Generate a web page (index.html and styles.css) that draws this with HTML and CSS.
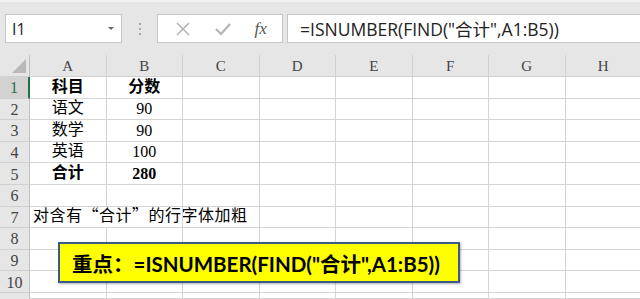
FILE: index.html
```html
<!DOCTYPE html>
<html lang="zh-CN">

<head>
  <meta charset="UTF-8">
  <meta name="viewport" content="width=device-width, initial-scale=1.0">
  <title>ISNUMBER FIND</title>
  <link rel="stylesheet" href="styles.css">
</head>

<body>
  <div class="toolbar">
    <div class="namebox">
      <span>I1</span>
      <span class="caret"></span>
    </div>
    <div class="dots"><i></i><i></i><i></i></div>
    <div class="buttons">
      <svg width="16" height="16" viewBox="0 0 16 16"><path d="M2 2 L14 14 M14 2 L2 14" stroke="#b4b4b4" stroke-width="1.6" fill="none"/></svg>
      <svg width="18" height="16" viewBox="0 0 18 16"><path d="M2 8 L7 13 L16 3" stroke="#b4b4b4" stroke-width="2.2" fill="none"/></svg>
      <span class="fx">fx</span>
    </div>
    <div class="formula">=ISNUMBER(FIND("合计",A1:B5))</div>
  </div>

  <div class="sheet">
    <div class="grid">
      <div class="corner"><span class="tri"></span></div>
      <div class="colhead">A</div>
      <div class="colhead">B</div>
      <div class="colhead">C</div>
      <div class="colhead">D</div>
      <div class="colhead">E</div>
      <div class="colhead">F</div>
      <div class="colhead">G</div>
      <div class="colhead">H</div>

      <div class="rowhead active">1</div>
      <div class="cell center bold">科目</div>
      <div class="cell center bold">分数</div>
      <div class="cell"></div><div class="cell"></div><div class="cell"></div><div class="cell"></div><div class="cell"></div><div class="cell"></div>

      <div class="rowhead">2</div>
      <div class="cell center">语文</div>
      <div class="cell center">90</div>
      <div class="cell"></div><div class="cell"></div><div class="cell"></div><div class="cell"></div><div class="cell"></div><div class="cell"></div>

      <div class="rowhead">3</div>
      <div class="cell center">数学</div>
      <div class="cell center">90</div>
      <div class="cell"></div><div class="cell"></div><div class="cell"></div><div class="cell"></div><div class="cell"></div><div class="cell"></div>

      <div class="rowhead">4</div>
      <div class="cell center">英语</div>
      <div class="cell center">100</div>
      <div class="cell"></div><div class="cell"></div><div class="cell"></div><div class="cell"></div><div class="cell"></div><div class="cell"></div>

      <div class="rowhead">5</div>
      <div class="cell center bold">合计</div>
      <div class="cell center bold">280</div>
      <div class="cell"></div><div class="cell"></div><div class="cell"></div><div class="cell"></div><div class="cell"></div><div class="cell"></div>

      <div class="rowhead">6</div>
      <div class="cell"></div><div class="cell"></div><div class="cell"></div><div class="cell"></div><div class="cell"></div><div class="cell"></div><div class="cell"></div><div class="cell"></div>

      <div class="rowhead">7</div>
      <div class="cell overflow cjk">对含有“合计”的行字体加粗</div>
      <div class="cell"></div><div class="cell"></div><div class="cell"></div><div class="cell"></div><div class="cell"></div><div class="cell"></div><div class="cell"></div>

      <div class="rowhead">8</div>
      <div class="cell"></div><div class="cell"></div><div class="cell"></div><div class="cell"></div><div class="cell"></div><div class="cell"></div><div class="cell"></div><div class="cell"></div>

      <div class="rowhead">9</div>
      <div class="cell"></div><div class="cell"></div><div class="cell"></div><div class="cell"></div><div class="cell"></div><div class="cell"></div><div class="cell"></div><div class="cell"></div>

      <div class="rowhead">10</div>
      <div class="cell"></div><div class="cell"></div><div class="cell"></div><div class="cell"></div><div class="cell"></div><div class="cell"></div><div class="cell"></div><div class="cell"></div>

      <div class="rowhead last"></div>
      <div class="cell"></div><div class="cell"></div><div class="cell"></div><div class="cell"></div><div class="cell"></div><div class="cell"></div><div class="cell"></div><div class="cell"></div>
    </div>

    <div class="note"><span class="key">重点：</span>=ISNUMBER(FIND("合计",A1:B5))</div>
  </div>
</body>

</html>
```

FILE: styles.css
```css
body {
  margin: 0;
  width: 640px;
  height: 299px;
  overflow: hidden;
  background-color: #ffffff;
  font-family: "Liberation Serif", "Noto Sans CJK SC", serif;
}

.toolbar {
  height: 55px;
  box-sizing: border-box;
  border-top: 2px solid #f2f2f2;
  background-color: #e6e6e6;
  display: flex;
  align-items: flex-start;
  padding-top: 12px;
}

.namebox {
  margin-left: 5px;
  width: 117px;
  height: 29px;
  box-sizing: border-box;
  background-color: #ffffff;
  border: 1px solid #c6c6c6;
  display: flex;
  align-items: center;
  justify-content: space-between;
  padding: 0 7px 0 6px;
  font-family: "Open Sans", "Liberation Sans", sans-serif;
  font-size: 16px;
  color: #222222;
}

.caret {
  width: 0;
  height: 0;
  border-left: 3px solid transparent;
  border-right: 3px solid transparent;
  border-top: 3px solid #666666;
}

.dots {
  width: 35px;
  height: 29px;
  display: flex;
  flex-direction: column;
  align-items: center;
  justify-content: center;
  gap: 3px;
}

.dots i {
  width: 2px;
  height: 2px;
  background-color: #a8a8a8;
}

.buttons {
  width: 126px;
  height: 29px;
  box-sizing: border-box;
  background-color: #ffffff;
  border: 1px solid #c6c6c6;
  display: flex;
  align-items: center;
  justify-content: space-around;
  padding: 0 4px 0 6px;
}

.fx {
  font-family: "Liberation Serif", serif;
  font-style: italic;
  font-size: 17px;
  color: #555555;
}

.formula {
  margin-left: 4px;
  flex: 1;
  height: 29px;
  box-sizing: border-box;
  background-color: #ffffff;
  border: 1px solid #c6c6c6;
  border-right: none;
  padding-left: 12px;
  display: flex;
  align-items: center;
  font-family: "Open Sans", "Noto Sans CJK SC", sans-serif;
  font-size: 17.5px;
  color: #222222;
}

.sheet {
  position: relative;
}

.grid {
  display: grid;
  grid-template-columns: 30px repeat(8, 76.5px);
  grid-template-rows: 22px repeat(10, 21.6px) 6px;
  overflow: hidden;
}

.corner,
.colhead,
.rowhead {
  background-color: #e6e6e6;
  color: #444444;
  box-sizing: border-box;
  border-right: 1px solid #d0d0d0;
  border-bottom: 1px solid #d0d0d0;
  display: flex;
  align-items: center;
  justify-content: center;
  font-family: "Liberation Serif", serif;
  font-size: 15px;
}

.corner {
  position: relative;
  border-right-color: #c0c0c0;
}

.tri {
  position: absolute;
  right: 3px;
  bottom: 3px;
  width: 0;
  height: 0;
  border-left: 14px solid transparent;
  border-bottom: 14px solid #b9b9b9;
}

.colhead {
  padding-top: 1px;
}

.rowhead {
  padding-top: 2px;
  font-size: 16px;
  border-right-color: #c0c0c0;
}

.rowhead.last {
  border-bottom: none;
}

.rowhead.active {
  background-color: #d2d2d2;
  border-right: 2px solid #217346;
  color: #217346;
}

.cell {
  box-sizing: border-box;
  border-right: 1px solid #d4d4d4;
  border-bottom: 1px solid #d4d4d4;
  display: flex;
  align-items: flex-end;
  padding: 0 3px 1px;
  font-size: 16px;
  color: #000000;
  white-space: nowrap;
}

.center {
  justify-content: center;
}

.bold {
  font-weight: bold;
}

.cjk {
  font-family: "Noto Sans CJK SC", sans-serif;
  letter-spacing: 0.5px;
}

.overflow {
  overflow: visible;
  border-right-color: transparent;
}

.note {
  position: absolute;
  left: 58px;
  top: 187px;
  width: 402px;
  height: 41px;
  box-sizing: border-box;
  background-color: #ffff00;
  border: 2px solid #3c5a86;
  box-shadow: 1px 1px 2px rgba(0, 0, 0, 0.3);
  padding-left: 12px;
  display: flex;
  align-items: center;
  font-family: "Lato", "Noto Sans CJK SC", sans-serif;
  font-weight: bold;
  font-size: 20.5px;
  color: #000000;
}

.key {
  font-family: "Noto Sans CJK SC", serif;
  font-weight: bold;
}
```
